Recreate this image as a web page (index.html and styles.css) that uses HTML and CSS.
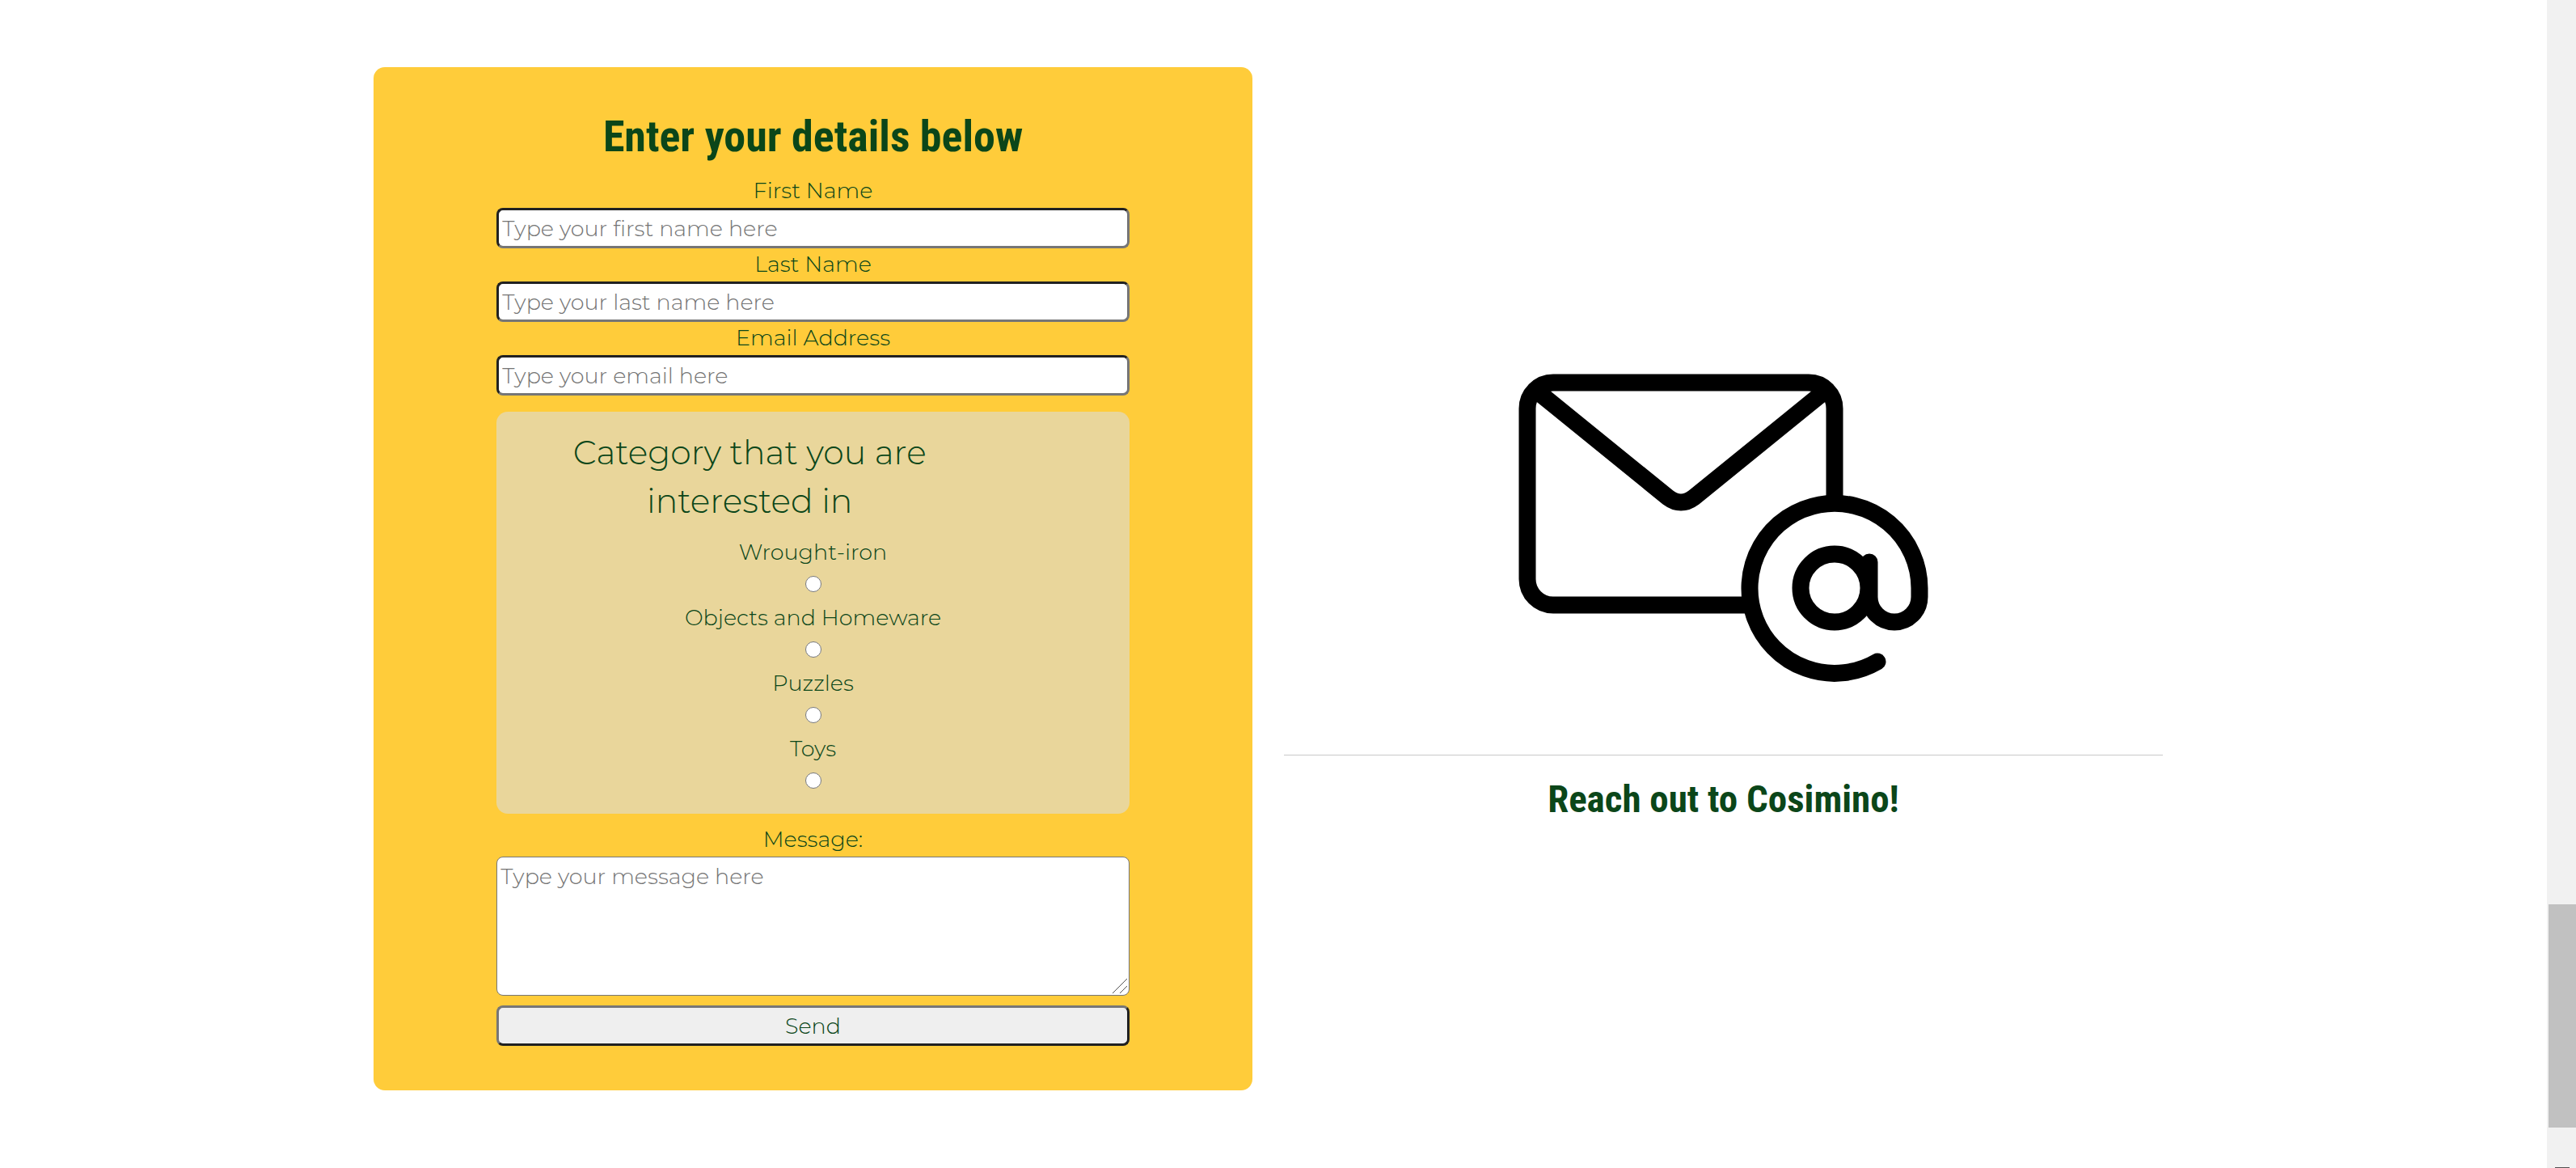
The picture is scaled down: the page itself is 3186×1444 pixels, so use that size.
FILE: index.html
```html
<!DOCTYPE html>
<html lang="en">
<head>
<meta charset="utf-8">
<meta name="viewport" content="width=device-width, initial-scale=1">
<title>Contact Cosimino</title>
<link rel="stylesheet" href="styles.css">
</head>
<body>
<div class="viewport">
  <main class="contact">
    <form class="card">
      <h2 class="card-title">Enter your details below</h2>
      <label class="label" for="first-name">First Name</label>
      <input class="field" type="text" id="first-name" placeholder="Type your first name here">
      <label class="label" for="last-name">Last Name</label>
      <input class="field" type="text" id="last-name" placeholder="Type your last name here">
      <label class="label" for="email">Email Address</label>
      <input class="field" type="email" id="email" placeholder="Type your email here">
      <fieldset class="categories">
        <legend class="legend">Category that you are interested in</legend>
        <label class="label" for="iron">Wrought-iron</label>
        <input class="radio" type="radio" name="category" id="iron">
        <label class="label" for="homeware">Objects and Homeware</label>
        <input class="radio" type="radio" name="category" id="homeware">
        <label class="label" for="puzzles">Puzzles</label>
        <input class="radio" type="radio" name="category" id="puzzles">
        <label class="label" for="toys">Toys</label>
        <input class="radio" type="radio" name="category" id="toys">
      </fieldset>
      <label class="label" for="message">Message:</label>
      <textarea class="message" id="message" placeholder="Type your message here"></textarea>
      <button class="send" type="submit">Send</button>
    </form>
    <section class="reach">
      <svg class="mail" viewBox="1878 462 508 382" fill="none" stroke="#000" stroke-width="21" stroke-linecap="round" stroke-linejoin="round" aria-hidden="true">
        <path stroke-linecap="butt" d="M2269 621V505a32 32 0 0 0-32-32H1921a32 32 0 0 0-32 32V716a32 32 0 0 0 32 32H2166"/>
        <path d="M1899 482L2063 615Q2079 627 2095 615L2259 482"/>
        <path d="M2322 818A105 105 0 1 1 2374 727V738A31 31 0 0 1 2312 738V695"/>
        <circle cx="2269" cy="727" r="42"/>
      </svg>
      <hr class="rule">
      <h3 class="reach-title">Reach out to Cosimino!</h3>
    </section>
  </main>
  <div class="scroll-track" aria-hidden="true">
    <div class="scroll-thumb"></div>
    <div class="scroll-arrow"></div>
  </div>
</div>
</body>
</html>
```
FILE: styles.css
```css
* {
  box-sizing: border-box;
}

body {
  margin: 0;
  background: #fff;
  color: #0b4619;
  font-family: Montserrat, "Open Sans", sans-serif;
  font-size: 27px;
  font-weight: 350;
  font-variant-ligatures: none;
  line-height: 39px;
}

.viewport {
  display: flex;
  min-height: 100vh;
}

/* Two equal columns: form and illustration */
.contact {
  flex: 1;
  display: grid;
  grid-template-columns: 1fr 1fr;
  align-items: start;
  gap: 39px;
  padding: 83px 475px 0 462px;
}

.card {
  display: flex;
  flex-direction: column;
  padding: 54px 14% 55px;
  border-radius: 14px;
  background: #ffcc3a;
  text-align: center;
}

.card-title,
.reach-title {
  margin: 0;
  font-family: "Roboto Condensed", Roboto, sans-serif;
  font-weight: 700;
}

.card-title {
  margin-bottom: 15px;
  font-size: 54px;
  line-height: 64px;
}

.label {
  display: block;
  clear: both;
  padding-bottom: 2px;
}

.field,
.message,
.send {
  width: 100%;
  border-radius: 8px;
  color: inherit;
  font: inherit;
  font-variant-ligatures: none;
}

.field {
  height: 50px;
  padding: 0 4px;
  border: 3px inset #767676;
  background: #fff;
}

.field::placeholder,
.message::placeholder {
  color: #757575;
}

.categories {
  min-width: 0;
  margin: 20px 0 12px;
  padding: 20px 0 19px;
  border: 0;
  border-radius: 14px;
  background: #e9d69b;
}

.legend {
  float: left;
  width: 80%;
  margin-bottom: 14px;
  padding: 0 60px;
  font-size: 41px;
  line-height: 60px;
}

.radio {
  display: block;
  width: 20px;
  height: 20px;
  margin: 8px auto 12px;
}

.message {
  display: block;
  height: 172px;
  padding: 4px;
  border: 1px solid #767676;
  background: #fff url("data:image/svg+xml,%3Csvg xmlns='http://www.w3.org/2000/svg' width='18' height='18'%3E%3Cpath d='M0 18L18 0M9 18L18 9' stroke='%23555'/%3E%3C/svg%3E") no-repeat right 2px bottom 2px;
}

.message::-webkit-resizer {
  background: transparent;
}

.send {
  height: 50px;
  margin-top: 12px;
  padding: 0;
  border: 3px outset #767676;
  background: #efefef;
}

.reach {
  align-self: center;
  display: flex;
  flex-direction: column;
  align-items: center;
  padding-bottom: 50px;
}

.mail {
  width: 508px;
  max-width: 100%;
}

.rule {
  width: 100%;
  height: 1px;
  margin: 89px 0 26px;
  border: 0;
  background: #c8c8c8;
}

.reach-title {
  font-size: 47px;
  line-height: 56px;
}

/* Page scroll bar */
.scroll-track {
  display: flex;
  flex-direction: column;
  width: 36px;
  height: 100vh;
  padding-left: 2px;
  background: #f1f1f1;
}

.scroll-thumb {
  height: 19.1%;
  margin-top: auto;
  background: #c1c1c1;
}

.scroll-arrow {
  width: 18px;
  height: 1px;
  margin: 49px 0 0 8px;
  background: #505050;
}
```
